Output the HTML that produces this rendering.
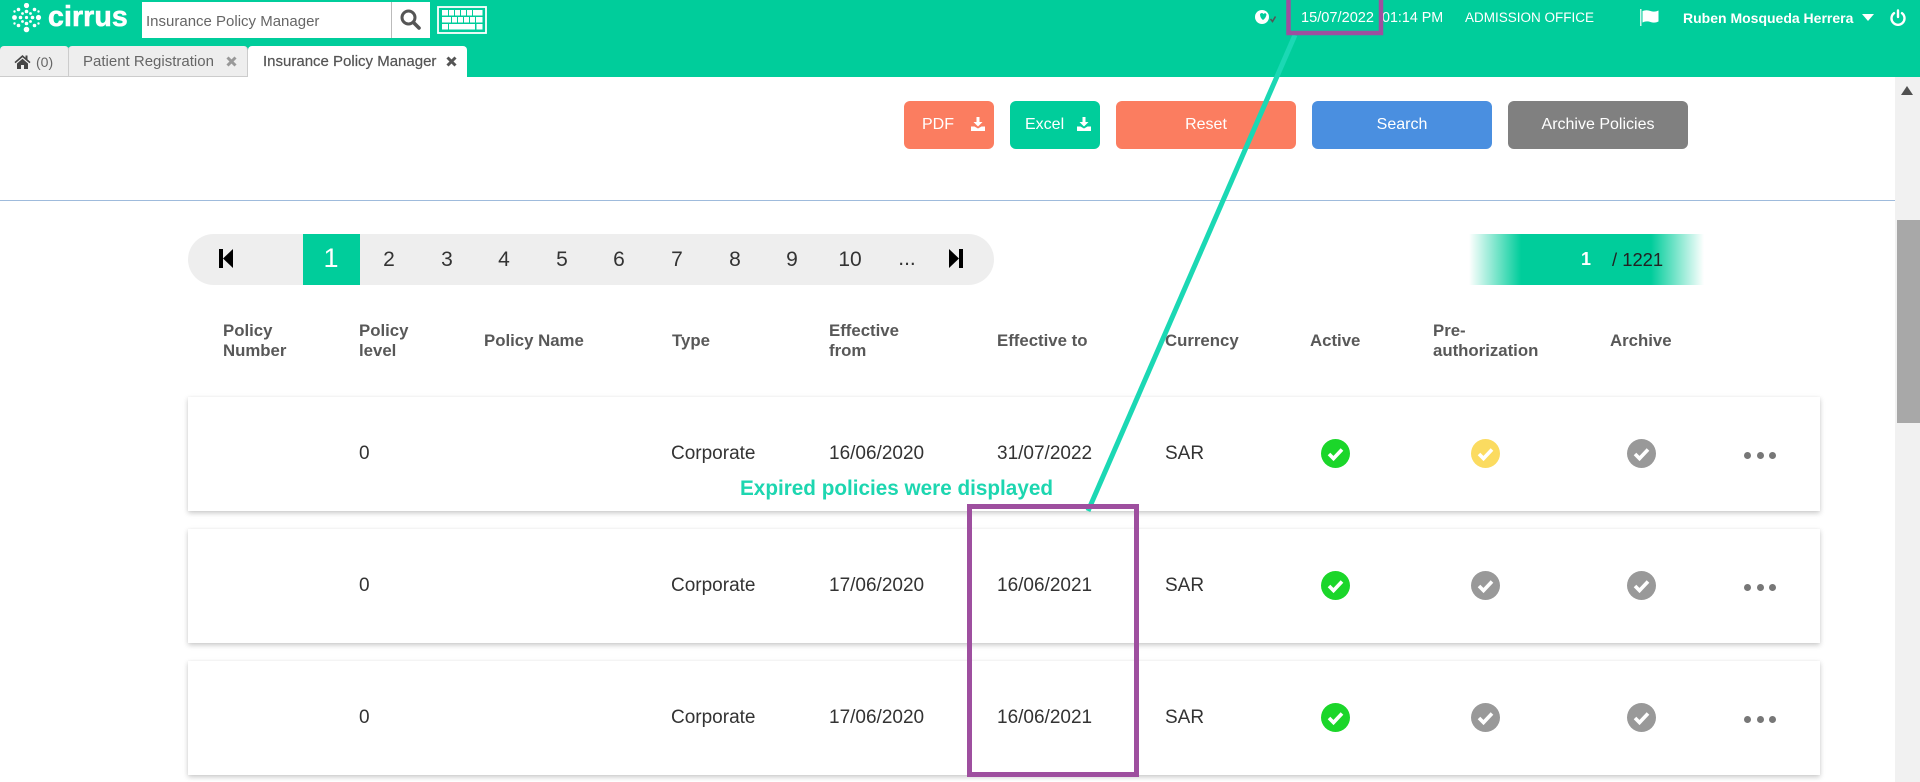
<!DOCTYPE html>
<html>
<head>
<meta charset="utf-8">
<title>Insurance Policy Manager</title>
<style>
html,body{margin:0;padding:0;width:1920px;height:782px;overflow:hidden;background:#fff;font-family:"Liberation Sans",sans-serif}
#p{position:relative;width:1920px;height:782px;overflow:hidden;background:#fff}
#p div,#p svg{position:absolute}
.t{white-space:nowrap}
.hd{color:#fff;font-size:14px;top:9px;line-height:18px}
.tab{top:46px;height:31px;border-radius:4px 4px 0 0;box-sizing:border-box}
.tt{top:53px;font-size:15px;line-height:18px;color:#666}
.btn{top:101px;height:48px;border-radius:6px;color:#fff;font-size:16px;line-height:48px;text-align:center}
.pg{top:248px;width:40px;text-align:center;font-size:21px;line-height:24px;color:#333}
.th{font-size:16.800px;font-weight:bold;color:#585858;line-height:20px;white-space:nowrap}
.card{left:188px;width:1632px;height:114px;background:#fff;box-shadow:0 2px 5px rgba(0,0,0,.22),0 0 2px rgba(0,0,0,.03)}
.c{font-size:19px;line-height:22px;color:#333;white-space:nowrap}
.dot{width:7px;height:7px;border-radius:50%;background:#777}
</style>
</head>
<body>
<div id="p">

<!-- header -->
<div style="left:0;top:0;width:1920px;height:77px;background:#00cd9b"></div>

<svg style="left:12px;top:3px" width="30" height="30" viewBox="0 0 30 30" fill="#fff">
<circle cx="14.500" cy="2.500" r="2.600"/><circle cx="14.500" cy="8.500" r="1.800"/><circle cx="14.500" cy="20.500" r="1.800"/><circle cx="14.500" cy="26.500" r="2.800"/>
<circle cx="2.500" cy="14.500" r="2.400"/><circle cx="8.500" cy="14.500" r="1.800"/><circle cx="20.500" cy="14.500" r="1.800"/><circle cx="26.500" cy="14.500" r="2.600"/>
<circle cx="14.500" cy="14.500" r="1.600"/>
<circle cx="6.500" cy="6.500" r="1.800"/><circle cx="22.500" cy="6.500" r="1.800"/><circle cx="6.500" cy="22.500" r="1.800"/><circle cx="22.500" cy="22.500" r="1.800"/>
<circle cx="10.500" cy="10.500" r="1.400"/><circle cx="18.500" cy="10.500" r="1.400"/><circle cx="10.500" cy="18.500" r="1.400"/><circle cx="18.500" cy="18.500" r="1.400"/>
<circle cx="2.500" cy="8.500" r="1.200"/><circle cx="26.500" cy="8.500" r="1.200"/><circle cx="2.500" cy="20.500" r="1.200"/><circle cx="26.500" cy="20.500" r="1.200"/>
</svg>
<div class="t" style="left:48px;top:0;font-size:28.500px;font-weight:bold;color:#fff;line-height:34px;-webkit-text-stroke:.6px #fff;letter-spacing:.1px">cirrus</div>

<div style="left:142px;top:2px;width:288px;height:36px;background:#fff"></div>
<div style="left:391px;top:2px;width:1px;height:36px;background:#bbb"></div>
<div class="t" style="left:146px;top:13px;font-size:15px;line-height:18px;color:#666">Insurance Policy Manager</div>
<svg style="left:400px;top:9px" width="21" height="21" viewBox="0 0 21 21" fill="none" stroke="#555"><circle cx="8.500" cy="8.500" r="6.500" stroke-width="3"/><path d="M13.500 13.500L19 19" stroke-width="3.600" stroke-linecap="round"/></svg>

<svg style="left:437px;top:6px" width="50" height="28" viewBox="0 0 50 28">
<rect x="1" y="1" width="48" height="26" fill="none" stroke="#fff" stroke-width="1.800"/>
<g fill="#fff">
<rect x="5" y="4" width="6" height="5.500"/><rect x="12" y="4" width="5" height="5.500"/><rect x="18" y="4" width="5" height="5.500"/><rect x="24" y="4" width="5" height="5.500"/><rect x="30" y="4" width="5" height="5.500"/><rect x="36" y="4" width="9.500" height="5.500"/>
<rect x="5" y="11" width="9" height="5.500"/><rect x="15" y="11" width="5" height="5.500"/><rect x="21" y="11" width="5" height="5.500"/><rect x="27" y="11" width="5" height="5.500"/><rect x="33" y="11" width="5" height="5.500"/><rect x="39" y="11" width="6.500" height="5.500"/>
<rect x="5" y="18" width="6" height="5.500"/><rect x="12" y="18" width="26" height="5.500"/><rect x="39.500" y="18" width="6" height="5.500"/>
</g>
</svg>

<!-- tabs -->
<div class="tab" style="left:0;width:69px;background:#eee;border-right:1px solid #ccc;border-bottom:1px solid #ccc"></div>
<svg style="left:14px;top:54px" width="17" height="15" viewBox="0 0 17 15" fill="#444"><path d="M8.500 1L0.500 8l1 1.200L8.500 3.200l7 6L16.500 8l-3-2.600V1.500h-2v2.200z"/><path d="M3 9.500L8.500 4.700 14 9.500V15h-4v-4H7v4H3z"/></svg>
<div class="t tt" style="left:36px;font-size:14px;color:#666">(0)</div>
<div class="tab" style="left:68px;width:180px;background:#eee;border-left:1px solid #ccc;border-right:1px solid #ccc;border-bottom:1px solid #ccc"></div>
<div class="t tt" style="left:83px">Patient Registration</div>
<svg style="left:226px;top:56px" width="11" height="11" viewBox="0 0 11 11" stroke="#999" stroke-width="3"><path d="M1.500 1.500l8 8M9.500 1.500l-8 8"/></svg>
<div class="tab" style="left:248px;width:219px;background:#fff"></div>
<div class="t tt" style="left:263px;color:#555;-webkit-text-stroke:.2px #555">Insurance Policy Manager</div>
<svg style="left:446px;top:56px" width="11" height="11" viewBox="0 0 11 11" stroke="#555" stroke-width="3"><path d="M1.500 1.500l8 8M9.500 1.500l-8 8"/></svg>

<!-- right header -->
<svg style="left:1255px;top:9px" width="22" height="18" viewBox="0 0 22 18"><circle cx="7" cy="8" r="7" fill="#fff"/><path d="M5 5q2-2 3.500 0 2-2 3 .5Q11 9 8 11 5 9 5 5z" fill="#00cd9b"/><path d="M15.500 10l2 2.500 3-5" fill="none" stroke="#555" stroke-width="1.600"/></svg>
<div class="t hd" style="left:1301px;font-size:14.600px">15/07/2022</div>
<div class="t hd" style="left:1382px;font-size:14.300px">01:14 PM</div>
<div class="t hd" style="left:1465px;font-size:13.500px">ADMISSION OFFICE</div>
<svg style="left:1640px;top:9px" width="20" height="17" viewBox="0 0 20 17" fill="#fff"><rect x="0" y="0" width="1.500" height="17" opacity=".8"/><path d="M2.500 2q4-1.500 8 0t8-.5v11q-4 2-8 .5t-8 .5z"/></svg>
<div class="t hd" style="left:1683px;font-weight:bold;top:9px">Ruben Mosqueda Herrera</div>
<svg style="left:1862px;top:14px" width="12" height="7" viewBox="0 0 12 7" fill="#fff"><path d="M0 0h12L6 7z"/></svg>
<svg style="left:1890px;top:9px" width="16" height="17" viewBox="0 0 16 17" fill="none" stroke="#fff" stroke-width="2.400" stroke-linecap="round"><path d="M8 1.500v6.500"/><path d="M4 4.200a6.500 6.500 0 1 0 8 0"/></svg>

<!-- toolbar -->
<div class="btn" style="left:904px;width:90px;background:#fb7d60"><span style="position:absolute;left:18px">PDF</span></div>
<svg style="left:971px;top:117px" width="14" height="14" viewBox="0 0 14 14" fill="#fff"><path d="M5.500 0h3v5h3L7 9.500 2.500 5h3z"/><path d="M0 9.500h3.500L7 11.500l3.500-2H14V14H0z"/></svg>
<div class="btn" style="left:1010px;width:90px;background:#00cd9b"><span style="position:absolute;left:15px">Excel</span></div>
<svg style="left:1077px;top:117px" width="14" height="14" viewBox="0 0 14 14" fill="#fff"><path d="M5.500 0h3v5h3L7 9.500 2.500 5h3z"/><path d="M0 9.500h3.500L7 11.500l3.500-2H14V14H0z"/></svg>
<div class="btn" style="left:1116px;width:180px;background:#fb7d60">Reset</div>
<div class="btn" style="left:1312px;width:180px;background:#4a8fe0">Search</div>
<div class="btn" style="left:1508px;width:180px;background:#808080">Archive Policies</div>

<div style="left:0;top:200px;width:1895px;height:1px;background:#9fbbdc"></div>

<!-- scrollbar -->
<div style="left:1895px;top:77px;width:25px;height:705px;background:#f1f1f1"></div>
<svg style="left:1901px;top:86px" width="12" height="9" viewBox="0 0 12 9" fill="#505050"><path d="M6 0l6 9H0z"/></svg>
<div style="left:1897px;top:220px;width:23px;height:203px;background:#a8a8a8"></div>

<!-- pagination -->
<div style="left:188px;top:234px;width:806px;height:51px;border-radius:26px;background:#eee"></div>
<svg style="left:219px;top:249px" width="14" height="19" viewBox="0 0 14 19" fill="#000"><rect x="0" y="0" width="4" height="19"/><path d="M14 0v19L4 9.500z"/></svg>
<div style="left:303px;top:234px;width:57px;height:51px;background:#00cd9b"></div>
<div class="pg" style="left:311px;top:243px;font-size:27px;line-height:30px;color:#fff">1</div>
<div class="pg" style="left:369px">2</div>
<div class="pg" style="left:427px">3</div>
<div class="pg" style="left:484px">4</div>
<div class="pg" style="left:542px">5</div>
<div class="pg" style="left:599px">6</div>
<div class="pg" style="left:657px">7</div>
<div class="pg" style="left:715px">8</div>
<div class="pg" style="left:772px">9</div>
<div class="pg" style="left:830px">10</div>
<div class="pg" style="left:887px;top:247px">...</div>
<svg style="left:949px;top:249px" width="14" height="19" viewBox="0 0 14 19" fill="#000"><rect x="10" y="0" width="4" height="19"/><path d="M0 0v19l10-9.500z"/></svg>

<div style="left:1469px;top:234px;width:235px;height:51px;background:linear-gradient(90deg,rgba(0,205,155,0) 0,#00cd9b 52px,#00cd9b 182px,rgba(0,205,155,0) 100%)"></div>
<div class="t" style="left:1581px;top:249px;font-size:18px;font-weight:bold;color:#fff;line-height:21px">1</div>
<div class="t" style="left:1612px;top:249px;font-size:18.400px;color:#222;line-height:21px">/ 1221</div>

<!-- headers -->
<div class="th" style="left:223px;top:321px">Policy<br>Number</div>
<div class="th" style="left:359px;top:321px">Policy<br>level</div>
<div class="th" style="left:484px;top:331px">Policy Name</div>
<div class="th" style="left:672px;top:331px">Type</div>
<div class="th" style="left:829px;top:321px">Effective<br>from</div>
<div class="th" style="left:997px;top:331px">Effective to</div>
<div class="th" style="left:1165px;top:331px">Currency</div>
<div class="th" style="left:1310px;top:331px">Active</div>
<div class="th" style="left:1433px;top:321px">Pre-<br>authorization</div>
<div class="th" style="left:1610px;top:331px">Archive</div>

<!-- row 1 -->
<div class="card" style="top:397px"></div>
<div class="c" style="left:359px;top:443px">0</div>
<div class="c" style="left:671px;top:443px">Corporate</div>
<div class="c" style="left:829px;top:443px">16/06/2020</div>
<div class="c" style="left:997px;top:443px">31/07/2022</div>
<div class="c" style="left:1165px;top:443px">SAR</div>
<svg style="left:1321px;top:439px" width="29" height="29" viewBox="0 0 29 29"><circle cx="14.500" cy="14.500" r="14.500" fill="#1bd62a"/><path d="M8 15l4.500 4.500L21 10.500" fill="none" stroke="#fff" stroke-width="3.600"/></svg>
<svg style="left:1471px;top:439px" width="29" height="29" viewBox="0 0 29 29"><circle cx="14.500" cy="14.500" r="14.500" fill="#fbdb60"/><path d="M8 15l4.500 4.500L21 10.500" fill="none" stroke="#fff" stroke-width="3.600"/></svg>
<svg style="left:1627px;top:439px" width="29" height="29" viewBox="0 0 29 29"><circle cx="14.500" cy="14.500" r="14.500" fill="#999"/><path d="M8 15l4.500 4.500L21 10.500" fill="none" stroke="#fff" stroke-width="3.600"/></svg>
<div class="dot" style="left:1744px;top:452px"></div><div class="dot" style="left:1757px;top:452px"></div><div class="dot" style="left:1769px;top:452px"></div>

<!-- row 2 -->
<div class="card" style="top:529px"></div>
<div class="c" style="left:359px;top:575px">0</div>
<div class="c" style="left:671px;top:575px">Corporate</div>
<div class="c" style="left:829px;top:575px">17/06/2020</div>
<div class="c" style="left:997px;top:575px">16/06/2021</div>
<div class="c" style="left:1165px;top:575px">SAR</div>
<svg style="left:1321px;top:571px" width="29" height="29" viewBox="0 0 29 29"><circle cx="14.500" cy="14.500" r="14.500" fill="#1bd62a"/><path d="M8 15l4.500 4.500L21 10.500" fill="none" stroke="#fff" stroke-width="3.600"/></svg>
<svg style="left:1471px;top:571px" width="29" height="29" viewBox="0 0 29 29"><circle cx="14.500" cy="14.500" r="14.500" fill="#999"/><path d="M8 15l4.500 4.500L21 10.500" fill="none" stroke="#fff" stroke-width="3.600"/></svg>
<svg style="left:1627px;top:571px" width="29" height="29" viewBox="0 0 29 29"><circle cx="14.500" cy="14.500" r="14.500" fill="#999"/><path d="M8 15l4.500 4.500L21 10.500" fill="none" stroke="#fff" stroke-width="3.600"/></svg>
<div class="dot" style="left:1744px;top:584px"></div><div class="dot" style="left:1757px;top:584px"></div><div class="dot" style="left:1769px;top:584px"></div>

<!-- row 3 -->
<div class="card" style="top:661px"></div>
<div class="c" style="left:359px;top:707px">0</div>
<div class="c" style="left:671px;top:707px">Corporate</div>
<div class="c" style="left:829px;top:707px">17/06/2020</div>
<div class="c" style="left:997px;top:707px">16/06/2021</div>
<div class="c" style="left:1165px;top:707px">SAR</div>
<svg style="left:1321px;top:703px" width="29" height="29" viewBox="0 0 29 29"><circle cx="14.500" cy="14.500" r="14.500" fill="#1bd62a"/><path d="M8 15l4.500 4.500L21 10.500" fill="none" stroke="#fff" stroke-width="3.600"/></svg>
<svg style="left:1471px;top:703px" width="29" height="29" viewBox="0 0 29 29"><circle cx="14.500" cy="14.500" r="14.500" fill="#999"/><path d="M8 15l4.500 4.500L21 10.500" fill="none" stroke="#fff" stroke-width="3.600"/></svg>
<svg style="left:1627px;top:703px" width="29" height="29" viewBox="0 0 29 29"><circle cx="14.500" cy="14.500" r="14.500" fill="#999"/><path d="M8 15l4.500 4.500L21 10.500" fill="none" stroke="#fff" stroke-width="3.600"/></svg>
<div class="dot" style="left:1744px;top:716px"></div><div class="dot" style="left:1757px;top:716px"></div><div class="dot" style="left:1769px;top:716px"></div>

<!-- annotations -->
<svg style="left:0;top:0" width="1920" height="782" viewBox="0 0 1920 782">
<path d="M1295 35L1088 511" stroke="#1bd8b4" stroke-width="5" fill="none"/>
<rect x="1288.500" y="-3" width="92.500" height="36" fill="none" stroke="#9e4f9f" stroke-width="4.500"/>
<rect x="969.500" y="506.500" width="167" height="268" fill="none" stroke="#9e4f9f" stroke-width="5"/>
<text x="740" y="495" font-family="Liberation Sans, sans-serif" font-size="21" font-weight="bold" fill="#1dd6b0" textLength="313" lengthAdjust="spacingAndGlyphs">Expired policies were displayed</text>
</svg>

</div>
</body>
</html>
